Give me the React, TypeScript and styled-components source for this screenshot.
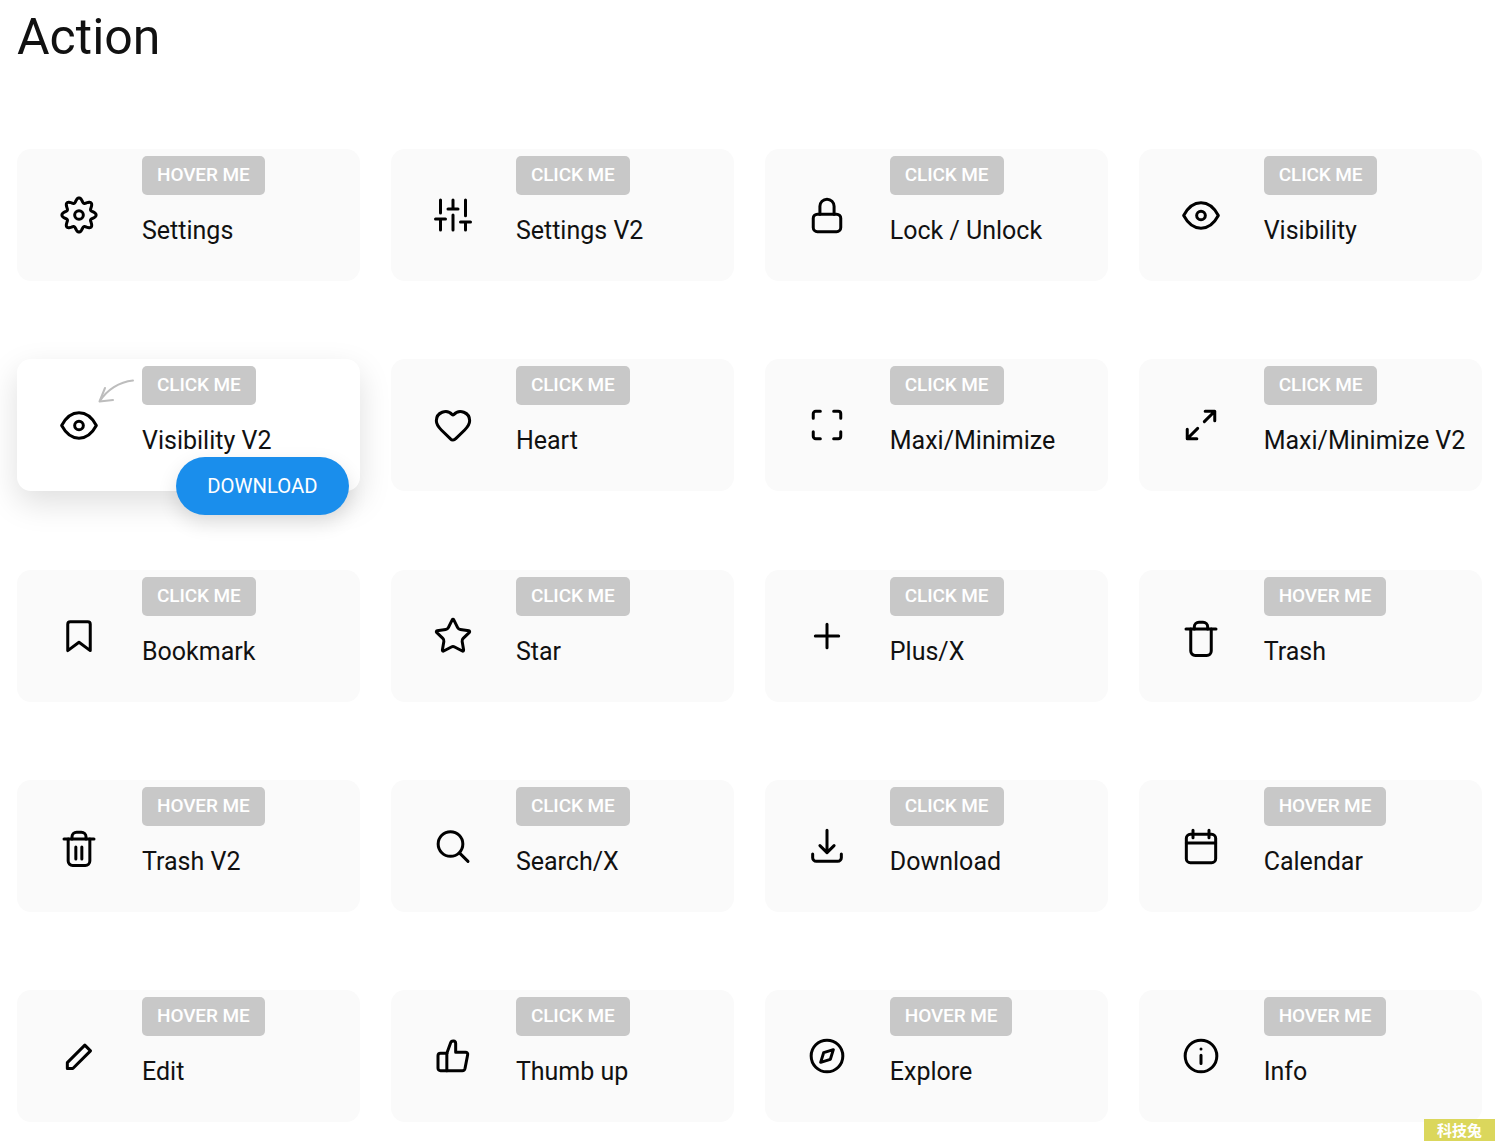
import React from "react";
import styled, { createGlobalStyle } from "styled-components";
import { Heart, Star } from "lucide-react";

const Global = createGlobalStyle`
  html, body { margin: 0; padding: 0; background: #fff; }
  body { font-family: Roboto, "Liberation Sans", sans-serif; color: #1a1a1a; }
`;

const Page = styled.main`
  position: relative;
  width: 1500px;
  height: 1146px;
  box-sizing: border-box;
  padding: 8px 18px 0 17px;
  overflow: hidden;
`;

const Title = styled.h1`
  margin: 0 0 83px;
  font-size: 50px;
  line-height: 58px;
  font-weight: 400;
  color: #111;
`;

const Grid = styled.section`
  display: grid;
  grid-template-columns: repeat(4, 342.9px);
  grid-auto-rows: 132px;
  column-gap: 31px;
  row-gap: 78.25px;
`;

const Card = styled.article<{ $active?: boolean }>`
  position: relative;
  display: flex;
  align-items: center;
  border-radius: 14px;
  background: ${(p) => (p.$active ? "#fff" : "#fafafa")};
  box-shadow: ${(p) => (p.$active ? "0 12px 32px rgba(0,0,0,0.13)" : "none")};
`;

const IconBox = styled.div`
  flex: none;
  width: 40px;
  height: 40px;
  margin-left: 42px;
  color: #000;
  svg { display: block; overflow: visible; }
`;

const Content = styled.div`
  align-self: flex-start;
  margin-left: 43px;
  padding-top: 7px;
`;

const Badge = styled.span`
  display: inline-block;
  height: 39px;
  line-height: 38px;
  padding: 0 15px;
  border-radius: 5px;
  background: #c8c8c8;
  color: #fff;
  font-size: 19px;
  font-weight: 500;
  white-space: nowrap;
  letter-spacing: -0.1px;
`;

const Label = styled.div`
  margin-top: 15px;
  font-size: 25px;
  line-height: 42px;
  white-space: nowrap;
  color: #111;
`;

const CurvedArrow = styled.svg`
  position: absolute;
  left: 78px;
  top: 16px;
  width: 42px;
  height: 30px;
  color: #bdbdbd;
`;

const DownloadButton = styled.button`
  position: absolute;
  right: 11px;
  bottom: -24px;
  width: 173px;
  height: 58px;
  border: 0;
  padding: 0;
  border-radius: 29px;
  background: #1a8eec;
  color: #fff;
  font-family: inherit;
  font-size: 20.3px;
  font-weight: 400;
  box-shadow: 0 8px 20px rgba(0, 0, 0, 0.12);
`;

const Watermark = styled.div`
  position: absolute;
  left: 1424px;
  top: 1119px;
  width: 71px;
  height: 22px;
  background: #dbd75c;
  color: #fff;
  font-family: "Noto Sans CJK SC", sans-serif;
  font-size: 15px;
  font-weight: 700;
  line-height: 21px;
  text-align: center;
`;

const Glyph = ({ children }: { children: React.ReactNode }) => (
  <svg
    width="40"
    height="40"
    viewBox="0 0 24 24"
    fill="none"
    stroke="currentColor"
    strokeWidth="1.8"
    strokeLinecap="round"
    strokeLinejoin="round"
  >
    {children}
  </svg>
);

const gearPath = (() => {
  const pts: string[] = [];
  for (let i = 0; i < 160; i++) {
    const t = (i / 160) * Math.PI * 2;
    const r = 8.9 + 1.35 * Math.cos(8 * t);
    pts.push(`${(12 + r * Math.sin(t)).toFixed(2)} ${(12 - r * Math.cos(t)).toFixed(2)}`);
  }
  return `M${pts.join("L")}Z`;
})();

const eye = (
  <Glyph>
    <path d="M1.6 12.3C4 7.8 7.8 4.7 12 4.7S20 7.8 22.4 12.3C20 16.8 16.2 19.9 12 19.9S4 16.8 1.6 12.3Z" />
    <circle cx="12" cy="12.3" r="2.6" />
  </Glyph>
);

type Item = { icon: React.ReactNode; badge: string; label: string; active?: boolean };

const items: Item[] = [
  {
    icon: (
      <Glyph>
        <path d={gearPath} />
        <circle cx="12" cy="12" r="2.6" />
      </Glyph>
    ),
    badge: "HOVER ME",
    label: "Settings",
  },
  {
    icon: (
      <Glyph>
        <path d="M4.5 3V10.8M4.5 14.4V21M1.5 14.4H7.5" />
        <path d="M12 3V8.4M12 12V21M9 8.4H15" />
        <path d="M19.5 3V12.5M19.5 16.2V21M16.5 16.2H22.5" />
      </Glyph>
    ),
    badge: "CLICK ME",
    label: "Settings V2",
  },
  {
    icon: (
      <Glyph>
        <rect x="3.75" y="11.5" width="16.5" height="10.5" rx="2.5" />
        <path d="M7.75 11.5V6.75a4.25 4.25 0 0 1 8.5 0V11.5" />
      </Glyph>
    ),
    badge: "CLICK ME",
    label: "Lock / Unlock",
  },
  { icon: eye, badge: "CLICK ME", label: "Visibility" },
  { icon: eye, badge: "CLICK ME", label: "Visibility V2", active: true },
  { icon: <Heart size={40} strokeWidth={1.8} />, badge: "CLICK ME", label: "Heart" },
  {
    icon: (
      <Glyph>
        <path d="M3.75 8V5.25a1.5 1.5 0 0 1 1.5-1.5H8" />
        <path d="M16 3.75h2.75a1.5 1.5 0 0 1 1.5 1.5V8" />
        <path d="M20.25 16v2.75a1.5 1.5 0 0 1-1.5 1.5H16" />
        <path d="M8 20.25H5.25a1.5 1.5 0 0 1-1.5-1.5V16" />
      </Glyph>
    ),
    badge: "CLICK ME",
    label: "Maxi/Minimize",
  },
  {
    icon: (
      <Glyph>
        <path d="M14.5 3.75H20.25V9.5M20.25 3.75L14 10" />
        <path d="M3.75 14.5V20.25H9.5M3.75 20.25L10 14" />
      </Glyph>
    ),
    badge: "CLICK ME",
    label: "Maxi/Minimize V2",
  },
  {
    icon: (
      <Glyph>
        <path d="M5.25 20.75V5a1.5 1.5 0 0 1 1.5-1.5h10.5a1.5 1.5 0 0 1 1.5 1.5V20.75L12 15.75Z" />
      </Glyph>
    ),
    badge: "CLICK ME",
    label: "Bookmark",
  },
  { icon: <Star size={40} strokeWidth={1.8} />, badge: "CLICK ME", label: "Star" },
  {
    icon: (
      <Glyph>
        <path d="M12 5V19M5 12H19" />
      </Glyph>
    ),
    badge: "CLICK ME",
    label: "Plus/X",
  },
  {
    icon: (
      <Glyph>
        <path d="M3 7.8H21" />
        <path d="M8 7.8V6.5a2.8 2.8 0 0 1 2.8-2.8h2.4A2.8 2.8 0 0 1 16 6.5V7.8" />
        <path d="M5.85 7.8V21a2.7 2.7 0 0 0 2.7 2.7h6.9a2.7 2.7 0 0 0 2.7-2.7V7.8" />
      </Glyph>
    ),
    badge: "HOVER ME",
    label: "Trash",
  },
  {
    icon: (
      <Glyph>
        <path d="M3 7.8H21" />
        <path d="M7.8 7.8V6.5a2.8 2.8 0 0 1 2.8-2.8h2.8a2.8 2.8 0 0 1 2.8 2.8V7.8" />
        <path d="M5.5 7.8V21a2.7 2.7 0 0 0 2.7 2.7h7.6a2.7 2.7 0 0 0 2.7-2.7V7.8" />
        <path d="M10.1 12.6V19.8M13.7 12.6V19.8" />
      </Glyph>
    ),
    badge: "HOVER ME",
    label: "Trash V2",
  },
  {
    icon: (
      <Glyph>
        <circle cx="10.5" cy="10.8" r="7.4" />
        <path d="M16 16.3L21 21.2" />
      </Glyph>
    ),
    badge: "CLICK ME",
    label: "Search/X",
  },
  {
    icon: (
      <Glyph>
        <path d="M12 2.5V16M7.75 11.75L12 16L16.25 11.75" />
        <path d="M3.4 16.8V19a2.2 2.2 0 0 0 2.2 2.2h12.8a2.2 2.2 0 0 0 2.2-2.2V16.8" />
      </Glyph>
    ),
    badge: "CLICK ME",
    label: "Download",
  },
  {
    icon: (
      <Glyph>
        <rect x="3.2" y="5" width="17.6" height="17" rx="2.4" />
        <path d="M3.2 10.2H20.8M7.2 2.5V7M16.8 2.5V7" />
      </Glyph>
    ),
    badge: "HOVER ME",
    label: "Calendar",
  },
  {
    icon: (
      <Glyph>
        <path d="M15.5 5.5L18.9 8.9L8.3 19.5H5V16Z" />
      </Glyph>
    ),
    badge: "HOVER ME",
    label: "Edit",
  },
  {
    icon: (
      <Glyph>
        <path d="M8.3 10.4L10.7 3.8c.4-1 2.9-1.2 2.9.7V9.7h5.9c.9 0 1.5.8 1.3 1.6L19.2 19.5c-.2.9-.9 1.3-1.6 1.3H4.5c-.9 0-1.5-.6-1.5-1.5V11.9c0-.9.6-1.5 1.5-1.5Z" />
        <path d="M8.3 10.4V20.8" />
      </Glyph>
    ),
    badge: "CLICK ME",
    label: "Thumb up",
  },
  {
    icon: (
      <Glyph>
        <circle cx="12" cy="12" r="9.5" />
        <path d="M15.8 8.2L14 14L8.2 15.8L10 10Z" />
      </Glyph>
    ),
    badge: "HOVER ME",
    label: "Explore",
  },
  {
    icon: (
      <Glyph>
        <circle cx="12" cy="12" r="9.5" />
        <path d="M12 11.5V16.5M12 7.75V7.8" />
      </Glyph>
    ),
    badge: "HOVER ME",
    label: "Info",
  },
];

export default function App() {
  return (
    <>
      <Global />
      <Page>
        <Title>Action</Title>
        <Grid>
          {items.map((item) => (
            <Card key={item.label} $active={item.active}>
              <IconBox>{item.icon}</IconBox>
              <Content>
                <Badge>{item.badge}</Badge>
                <Label>{item.label}</Label>
              </Content>
              {item.active && (
                <>
                  <CurvedArrow viewBox="0 0 42 30" fill="none" stroke="currentColor" strokeWidth="2" strokeLinecap="round" strokeLinejoin="round">
                    <path d="M38 5.5C24 7 12 15 5 26" />
                    <path d="M10 13L4.5 26.5L18 25" />
                  </CurvedArrow>
                  <DownloadButton>DOWNLOAD</DownloadButton>
                </>
              )}
            </Card>
          ))}
        </Grid>
        <Watermark>科技兔</Watermark>
      </Page>
    </>
  );
}
